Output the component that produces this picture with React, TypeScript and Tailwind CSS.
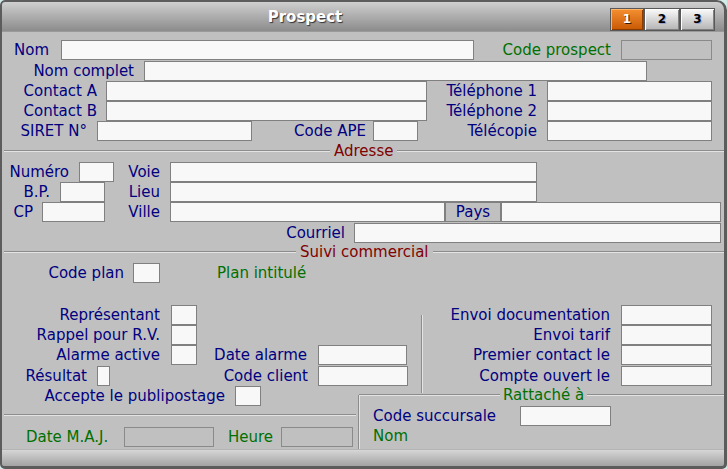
import React from "react";

type P = { className?: string; children?: React.ReactNode; color?: "blue" | "green" | "red" };

function Lbl({ className = "", children, color = "blue" }: P) {
  const c = color === "green" ? "text-[#007000]" : color === "red" ? "text-[#800000]" : "text-[#000080]";
  return <div className={`shrink-0 whitespace-nowrap leading-[20px] ${c} ${className}`}>{children}</div>;
}
function Inp({ className = "" }: P) {
  return <div className={`h-[20px] shrink-0 border border-[#808080] bg-[#f8f8f8] ${className}`} />;
}
function Dis({ className = "" }: P) {
  return <div className={`h-[20px] shrink-0 border border-[#8a8a8a] bg-[#c0c0c0] ${className}`} />;
}
function Row({ className = "", children }: P) {
  return <div className={`flex h-[20px] shrink-0 items-start ${className}`}>{children}</div>;
}
function Line({ className = "" }: P) {
  return <div className={`h-[2px] shrink-0 border-t border-b border-t-[#8c8c8c] border-b-[#e4e4e4] ${className}`} />;
}

export default function App() {
  return (
    <div className="h-[469px] w-[727px] bg-[#cfeeea] font-['DejaVu_Sans',Verdana,sans-serif] text-[15px]">
      <div className="relative flex h-full w-full flex-col overflow-hidden rounded-tl-[5px] rounded-tr-[10px] rounded-b-[5px] bg-[#c0c0c0]">
        {/* Title bar */}
        <div className="flex h-[32px] shrink-0 items-start border-b border-[#9a9a9a] bg-linear-to-b from-[#d4d4d4] to-[#8c8c8c]">
          <div className="flex-1 text-center text-[15px] font-bold leading-[35px] text-white [text-shadow:1px_1px_1px_#333333]">
            Prospect
          </div>
          <div className="mr-[12px] mt-[8px] flex gap-[2px] bg-[#585858] p-[1px] text-[12px] font-bold leading-[21px]">
            <div className="h-[21px] w-[32px] bg-linear-to-b from-[#f49030] to-[#c85800] text-center text-white shadow-[inset_1px_1px_0_#ffb468,inset_-1px_-1px_0_#8a3c00] [text-shadow:1px_1px_0_#3a1a00]">
              1
            </div>
            <div className="h-[21px] w-[34px] bg-linear-to-b from-[#fafafa] to-[#b4b4b4] text-center text-black shadow-[inset_1px_1px_0_#ffffff,inset_-1px_-1px_0_#808080] [text-shadow:1px_1px_0_#9aa4cc]">
              2
            </div>
            <div className="h-[21px] w-[33px] bg-linear-to-b from-[#fafafa] to-[#b4b4b4] text-center text-black shadow-[inset_1px_1px_0_#ffffff,inset_-1px_-1px_0_#808080] [text-shadow:1px_1px_0_#9aa4cc]">
              3
            </div>
          </div>
        </div>

        {/* Identity */}
        <Row className="mt-[8px]">
          <Lbl className="ml-[14px] w-[47px]">Nom</Lbl>
          <Inp className="w-[413px]" />
          <Lbl color="green" className="w-[147px] pr-[10px] text-right">Code prospect</Lbl>
          <Dis className="w-[91px]" />
        </Row>
        <Row className="mt-[1px]">
          <Lbl className="w-[144px] pr-[10px] text-right">Nom complet</Lbl>
          <Inp className="w-[503px]" />
        </Row>
        <Row>
          <Lbl className="w-[106px] pr-[9px] text-right">Contact A</Lbl>
          <Inp className="w-[321px]" />
          <Lbl className="w-[120px] pr-[10px] text-right">Téléphone 1</Lbl>
          <Inp className="w-[165px]" />
        </Row>
        <Row>
          <Lbl className="w-[106px] pr-[9px] text-right">Contact B</Lbl>
          <Inp className="w-[321px]" />
          <Lbl className="w-[120px] pr-[10px] text-right">Téléphone 2</Lbl>
          <Inp className="w-[165px]" />
        </Row>
        <Row>
          <Lbl className="w-[97px] pr-[10px] text-right">SIRET N°</Lbl>
          <Inp className="w-[155px]" />
          <Lbl className="w-[121px] pr-[7px] text-right">Code APE</Lbl>
          <Inp className="w-[45px]" />
          <Lbl className="w-[129px] pr-[10px] text-right">Télécopie</Lbl>
          <Inp className="w-[165px]" />
        </Row>

        {/* Adresse */}
        <div className="flex h-[20px] shrink-0 items-center pl-[4px] pr-[3px]">
          <Line className="w-[326px]" />
          <Lbl color="red" className="px-[4px]">Adresse</Lbl>
          <Line className="flex-1" />
        </div>
        <Row className="mt-[1px]">
          <Lbl className="w-[79px] pr-[10px] text-right">Numéro</Lbl>
          <Inp className="w-[35px]" />
          <Lbl className="w-[56px] pr-[10px] text-right">Voie</Lbl>
          <Inp className="w-[367px]" />
        </Row>
        <Row>
          <Lbl className="w-[60px] pr-[10px] text-right">B.P.</Lbl>
          <Inp className="w-[45px]" />
          <Lbl className="w-[65px] pr-[10px] text-right">Lieu</Lbl>
          <Inp className="w-[367px]" />
        </Row>
        <Row>
          <Lbl className="w-[42px] pr-[9px] text-right">CP</Lbl>
          <Inp className="w-[63px]" />
          <Lbl className="w-[65px] pr-[10px] text-right">Ville</Lbl>
          <Inp className="w-[275px]" />
          <div className="h-[20px] w-[56px] shrink-0 border border-[#808080] text-center leading-[18px] text-[#000080]">Pays</div>
          <Inp className="w-[220px]" />
        </Row>
        <Row className="mt-[1px]">
          <Lbl className="w-[354px] pr-[9px] text-right">Courriel</Lbl>
          <Inp className="w-[367px]" />
        </Row>

        {/* Suivi commercial */}
        <div className="flex h-[18px] shrink-0 items-center pl-[4px] pr-[3px]">
          <Line className="w-[292px]" />
          <Lbl color="red" className="px-[4px]">Suivi commercial</Lbl>
          <Line className="flex-1" />
        </div>
        <Row className="mt-[2px]">
          <Lbl className="w-[133px] pr-[9px] text-right">Code plan</Lbl>
          <Inp className="w-[27px]" />
          <Lbl color="green" className="ml-[57px]">Plan intitulé</Lbl>
        </Row>

        <div className="mt-[22px] flex shrink-0 items-start">
          <div className="flex w-[421px] shrink-0 flex-col">
            <Row>
              <Lbl className="w-[171px] pr-[11px] text-right">Représentant</Lbl>
              <Inp className="w-[26px]" />
            </Row>
            <Row>
              <Lbl className="w-[171px] pr-[11px] text-right">Rappel pour R.V.</Lbl>
              <Inp className="w-[26px]" />
            </Row>
            <Row>
              <Lbl className="w-[171px] pr-[11px] text-right">Alarme active</Lbl>
              <Inp className="w-[26px]" />
              <Lbl className="w-[121px] pr-[11px] text-right">Date alarme</Lbl>
              <Inp className="w-[89px]" />
            </Row>
            <Row className="mt-[1px]">
              <Lbl className="w-[97px] pr-[10px] text-right">Résultat</Lbl>
              <Inp className="w-[13px]" />
              <Lbl className="w-[208px] pr-[10px] text-right">Code client</Lbl>
              <Inp className="w-[90px]" />
            </Row>
            <Row>
              <Lbl className="w-[235px] pr-[10px] text-right">Accepte le publipostage</Lbl>
              <Inp className="w-[26px]" />
            </Row>
          </div>
          <div className="mt-[10px] h-[78px] w-[2px] shrink-0 border-l border-r border-l-[#8c8c8c] border-r-[#e4e4e4]" />
          <div className="flex flex-col">
            <Row>
              <Lbl className="w-[198px] pr-[11px] text-right">Envoi documentation</Lbl>
              <Inp className="w-[91px]" />
            </Row>
            <Row>
              <Lbl className="w-[198px] pr-[11px] text-right">Envoi tarif</Lbl>
              <Inp className="w-[91px]" />
            </Row>
            <Row>
              <Lbl className="w-[198px] pr-[11px] text-right">Premier contact le</Lbl>
              <Inp className="w-[91px]" />
            </Row>
            <Row className="mt-[1px]">
              <Lbl className="w-[198px] pr-[11px] text-right">Compte ouvert le</Lbl>
              <Inp className="w-[91px]" />
            </Row>
          </div>
        </div>

        {/* Bottom area */}
        <div className="-mt-[11px] flex min-h-0 flex-1">
          <div className="flex w-[358px] shrink-0 flex-col">
            <Line className="ml-[4px] mt-[19px] w-[352px]" />
            <Row className="mt-[11px]">
              <Lbl color="green" className="ml-[26px] w-[98px]">Date M.A.J.</Lbl>
              <Dis className="w-[90px]" />
              <Lbl color="green" className="ml-[14px] w-[53px]">Heure</Lbl>
              <Dis className="w-[72px]" />
            </Row>
          </div>
          <div className="flex flex-1 flex-col border-l border-[#8c8c8c] shadow-[inset_1px_0_0_#e4e4e4]">
            <div className="flex h-0 shrink-0 items-center">
              <Line className="w-[141px]" />
              <Lbl color="green" className="px-[3px]">Rattaché à</Lbl>
              <Line className="flex-1" />
            </div>
            <Row className="mt-[11px]">
              <Lbl className="ml-[14px] w-[147px]">Code succursale</Lbl>
              <Inp className="w-[91px]" />
            </Row>
            <Row>
              <Lbl color="green" className="ml-[14px]">Nom</Lbl>
            </Row>
          </div>
        </div>

        {/* Bottom bar */}
        <div className="h-[20px] shrink-0 border-t border-[#b4b4b4] bg-linear-to-b from-[#d6d6d6] to-[#9a9a9a]" />

        {/* Window frame */}
        <div className="pointer-events-none absolute inset-0 rounded-tl-[5px] rounded-tr-[10px] rounded-b-[5px] border-t-2 border-l-2 border-r-[3px] border-b-[3px] border-[#5c5c5c]" />
      </div>
    </div>
  );
}
